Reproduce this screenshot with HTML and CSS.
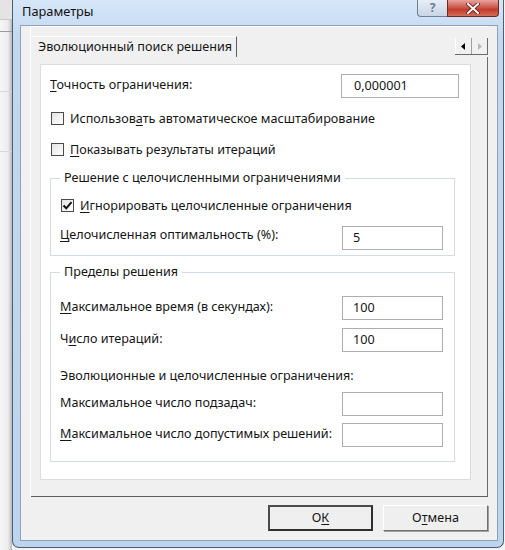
FILE: index.html
```html
<!DOCTYPE html>
<html lang="ru">
<head>
<meta charset="utf-8">
<title>Параметры</title>
<link rel="stylesheet" href="styles.css">
</head>
<body>
<div class="desk">
  <div class="sheet">
    <div class="sheet-head"></div>
    <div class="sheet-line"></div>
    <div class="sheet-line"></div>
    <div class="sheet-line"></div>
  </div>
  <div class="window">
    <div class="titlebar">
      <span class="title">Параметры</span>
      <div class="caption-btns">
        <div class="cap-help">?</div>
        <div class="cap-close">
          <svg width="14" height="11" viewBox="0 0 14 11"><path d="M2 1 L12 10 M12 1 L2 10" stroke="#5a1a16" stroke-width="3.6" stroke-linecap="square"/><path d="M2 1 L12 10 M12 1 L2 10" stroke="#ffffff" stroke-width="2" stroke-linecap="square"/></svg>
        </div>
      </div>
    </div>
    <div class="client">
      <div class="tabctl">
        <div class="tabstrip">
          <div class="tab">Эволюционный поиск решения</div>
          <div class="tabscroll">
            <span class="arr"><svg width="5" height="7" viewBox="0 0 5 7"><path d="M4 0 L0 3.5 L4 7 Z" fill="#000"/></svg></span>
            <span class="arr"><svg width="5" height="7" viewBox="0 0 5 7"><path d="M1 0 L5 3.5 L1 7 Z" fill="#b8b8b8"/></svg></span>
          </div>
        </div>
        <div class="page">
          <div class="panel">
            <div class="row first">
              <span class="lbl"><u>Т</u>очность ограничения:</span>
              <span class="field wide">0,000001</span>
            </div>
            <div class="check">
              <span class="box"></span>
              <span>Использов<u>а</u>ть автоматическое масштабирование</span>
            </div>
            <div class="check">
              <span class="box"></span>
              <span><u>П</u>оказывать результаты итераций</span>
            </div>
            <fieldset class="group g1">
              <legend>Решение с целочисленными ограничениями</legend>
              <div class="check inner">
                <span class="box checked"><svg width="11" height="11" viewBox="0 0 11 11"><path d="M1.5 5.5 L4.3 8.3 L9.5 2.2" fill="none" stroke="#111" stroke-width="2"/></svg></span>
                <span><u>И</u>гнорировать целочисленные ограничения</span>
              </div>
              <div class="row r-opt">
                <span class="lbl"><u>Ц</u>елочисленная оптимальность (%):</span>
                <span class="field">5</span>
              </div>
            </fieldset>
            <fieldset class="group g2">
              <legend>Пределы решения</legend>
              <div class="row r-time">
                <span class="lbl"><u>М</u>аксимальное время (в секундах):</span>
                <span class="field">100</span>
              </div>
              <div class="row r-iter">
                <span class="lbl">Ч<u>и</u>сло итераций:</span>
                <span class="field">100</span>
              </div>
              <div class="note">Эволюционные и целочисленные ограничения:</div>
              <div class="row r-sub">
                <span class="lbl">Максимальное число подзадач:</span>
                <span class="field"></span>
              </div>
              <div class="row r-feas">
                <span class="lbl"><u>М</u>аксимальное число допустимых решений:</span>
                <span class="field"></span>
              </div>
            </fieldset>
          </div>
        </div>
      </div>
      <div class="buttons">
        <div class="btn default">О<u>К</u></div>
        <div class="btn">О<u>т</u>мена</div>
      </div>
    </div>
  </div>
</div>
</body>
</html>
```

FILE: styles.css
```css
* { box-sizing: border-box; }
html, body { margin: 0; padding: 0; }
body {
  width: 505px;
  height: 550px;
  overflow: hidden;
  background: #f3f3f3;
  font-family: "Noto Sans", "Open Sans", sans-serif;
  font-size: 12.6px;
  color: #151515;
}
u { text-decoration: underline; text-underline-offset: 2px; }

.desk { display: flex; height: 550px; }

.sheet {
  width: 12px;
  flex: none;
  background: linear-gradient(to right, #f6f6f6 0, #ececec 8px, #b9b9b9 12px);
  display: flex;
  flex-direction: column;
}
.sheet-head { height: 20px; border-bottom: 1px solid #c9c9c9; background: #e4e4e4; }
.sheet-line { height: 12px; border-bottom: 1px solid #9a9a9a; }
.sheet-line + .sheet-line { height: 60px; border-bottom: 1px solid #d8d8d8; }

.window {
  width: 492px;
  height: 548px;
  flex: none;
  background: linear-gradient(to bottom, #d6e6f7 0, #c2d8f0 40px, #bcd4ee 100%);
  border: 1px solid #4e5d70;
  border-top: none;
  border-radius: 0 0 7px 7px;
  padding: 0 5px 6px 7px;
  display: flex;
  flex-direction: column;
}

.titlebar {
  height: 25px;
  flex: none;
  display: flex;
  align-items: flex-start;
  justify-content: space-between;
}
.title {
  margin: 2px 0 0 2px;
  font-size: 12.8px;
  color: #111;
  line-height: 18px;
}
.caption-btns { display: flex; margin-right: -1px; }
.cap-help {
  width: 30px;
  height: 17px;
  border: 1px solid #6f7f95;
  border-top: none;
  border-right: none;
  border-radius: 0 0 0 4px;
  background: linear-gradient(to bottom, #e7eef7, #c8d5e5);
  color: #6e7d94;
  font-size: 12px;
  font-weight: bold;
  line-height: 15px;
  text-align: center;
}
.cap-close {
  width: 52px;
  height: 17px;
  border: 1px solid #6b2a25;
  border-top: none;
  border-radius: 0 0 4px 0;
  background: linear-gradient(to bottom, #e6a49b 0, #cf5a4e 45%, #c23a2d 60%, #d46f58 100%);
  display: flex;
  align-items: center;
  justify-content: center;
}

.client {
  flex: 1;
  background: #f0f0f0;
  border: 1px solid #8ea2ba;
  display: flex;
  flex-direction: column;
}

.tabctl {
  margin-left: 9px;
  width: 458px;
  height: 471px;
  border-left: 1px solid #ffffff;
  border-top: 1px solid #ffffff;
  display: flex;
  flex-direction: column;
}
.tabstrip {
  height: 30px;
  flex: none;
  display: flex;
  align-items: flex-end;
}
.tab {
  margin-left: 1px;
  width: 205px;
  height: 21px;
  border-top: 1px solid #ffffff;
  border-right: 1px solid #5f5f5f;
  padding-left: 6px;
  line-height: 19px;
  white-space: nowrap;
}
.tabscroll {
  margin-left: auto;
  margin-bottom: 2px;
  display: flex;
  border-bottom: 1px solid #6b6b6b;
  border-right: 1px solid #6b6b6b;
}
.arr {
  width: 16px;
  height: 16px;
  display: flex;
  align-items: center;
  justify-content: center;
  border-left: 1px solid #ffffff;
}
.arr + .arr { border-left: 1px solid #a0a0a0; }

.page {
  flex: 1;
  border-right: 1px solid #6b6b6b;
  border-bottom: 1px solid #5e5e5e;
  padding: 7px 16px 0 9px;
}

.panel {
  height: 416px;
  background: #ffffff;
  border: 1px solid #d9dde3;
  padding: 9px 15px 0 9px;
}

.row {
  display: flex;
  align-items: center;
  justify-content: space-between;
  height: 23px;
}
.row .lbl { margin-top: -3px; }
.row.first { margin-right: -4px; }
.field {
  width: 101px;
  height: 24px;
  border: 1px solid #acadaf;
  background: #fff;
  padding-left: 10px;
  line-height: 22px;
}
.field.wide { width: 118px; padding-left: 12px; }

.check {
  display: flex;
  align-items: center;
  gap: 6px;
  height: 20px;
  margin-top: 11px;
  margin-left: 1px;
}
.box {
  width: 13px;
  height: 13px;
  flex: none;
  border: 1px solid #4a4a4a;
  background: linear-gradient(135deg, #e4e4e4, #ffffff);
  display: flex;
  align-items: center;
  justify-content: center;
}

.group {
  margin: 11px 0 0 0;
  padding: 0 11px 0 9px;
  border: 1px solid #d5dbe2;
  min-width: 0;
}
.group legend {
  padding: 0 4px;
  line-height: 16px;
}
.g1 { height: 86px; }
.g1 .check.inner { margin-top: 9px; }
.r-opt { margin-top: 11px; }
.r-opt .lbl { margin-top: -7px; }

.g2 { height: 198px; margin-top: 8px; }
.r-time { margin-top: 16px; }
.r-iter { margin-top: 9px; }
.note { height: 20px; line-height: 20px; margin-top: 15px; }
.r-sub { margin-top: 6px; }
.r-feas { margin-top: 8px; }

.buttons {
  display: flex;
  justify-content: flex-end;
  gap: 10px;
  margin-top: 8px;
  padding-right: 9px;
}
.btn {
  width: 105px;
  height: 26px;
  background: #efefef;
  border-top: 1px solid #ffffff;
  border-left: 1px solid #ffffff;
  border-right: 1px solid #6f6f6f;
  border-bottom: 1px solid #6f6f6f;
  box-shadow: 1px 1px 0 #a0a0a0;
  text-align: center;
  line-height: 23px;
}
.btn.default {
  border: 2px solid #2e2e2e;
  border-top-color: #4b4b4b;
  border-left-color: #4b4b4b;
  box-shadow: none;
  line-height: 21px;
}
```
